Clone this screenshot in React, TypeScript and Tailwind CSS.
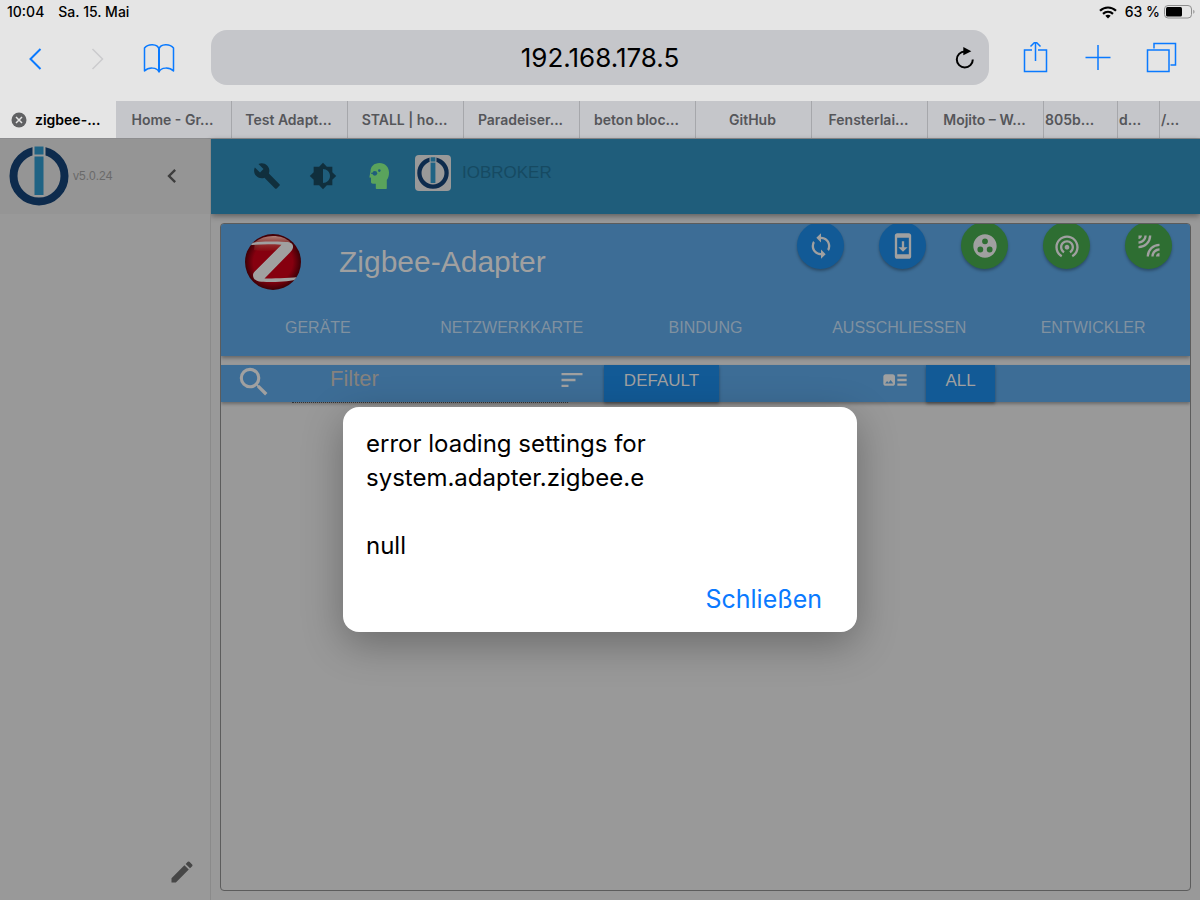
import { useState } from "react";
import {
  MdArtTrack,
  MdBrightness6,
  MdBuild,
  MdChevronLeft,
  MdCreate,
  MdGroupWork,
  MdLeakAdd,
  MdSearch,
  MdSort,
  MdSync,
  MdSystemUpdate,
  MdWifiTethering,
} from "react-icons/md";

const browserTabs = [
  "Home - Gr...",
  "Test Adapt...",
  "STALL | ho...",
  "Paradeiser...",
  "beton bloc...",
  "GitHub",
  "Fensterlai...",
  "Mojito – W...",
];

// tabs that are pushed together at the right edge
const stackedTabs = ["805b...", "d...", "/..."];

const adapterTabs = [
  "GERÄTE",
  "NETZWERKKARTE",
  "BINDUNG",
  "AUSSCHLIESSEN",
  "ENTWICKLER",
];

const actions = [
  { label: "Aktualisieren", icon: MdSync, color: "bg-[#125a96]" },
  { label: "Update", icon: MdSystemUpdate, color: "bg-[#125a96]" },
  { label: "Gruppen", icon: MdGroupWork, color: "bg-[#2e6e32]" },
  { label: "Touchlink", icon: MdWifiTethering, color: "bg-[#2e6e32]" },
  { label: "Pairing", icon: MdLeakAdd, color: "bg-[#2e6e32]" },
];

function IoBrokerLogo({ className }: { className?: string }) {
  return (
    <svg viewBox="0 0 60 60" className={className} aria-hidden="true">
      <circle cx="30" cy="30" r="25.5" fill="none" stroke="#0d2b4d" strokeWidth="8" />
      <rect x="23.5" y="0" width="13" height="12" fill="#999" />
      <rect x="25.5" y="0.5" width="9" height="8" fill="#1f6384" />
      <rect x="25.5" y="10.500" width="9" height="38.5" fill="#1f6384" />
      <rect x="25.500" y="49" width="9" height="1.500" fill="#999" />
    </svg>
  );
}

function ZigbeeLogo() {
  return (
    <svg viewBox="0 0 58 58" className="h-[58px] w-[58px]" aria-hidden="true">
      <defs>
        <radialGradient id="ball">
          <stop offset="0.7" stopColor="#86000f" />
          <stop offset="1" stopColor="#3c0006" />
        </radialGradient>
        <linearGradient id="shine" x1="0" y1="0" x2="0" y2="1">
          <stop offset="0" stopColor="#b08078" />
          <stop offset="1" stopColor="#8a2a20" stopOpacity="0.3" />
        </linearGradient>
        <clipPath id="disc">
          <circle cx="29" cy="29" r="28" />
        </clipPath>
      </defs>
      <circle cx="29" cy="29" r="28" fill="url(#ball)" />
      <path d="M11 9C16 5 22 3 29 3s13 2 17 6l2 5c-4 3-33 5-38 3z" fill="url(#shine)" />
      <g clipPath="url(#disc)" fill="#a0a0a0">
        <path d="M4 11C12 8 28 8.500 42 9c5 0 7.500 2 7 5.500-.5 2-1.500 3.500-3 5L20.500 45.500c8-.2 22 0 34-1.500v1.500c-8 4-28 3.700-37 3.200-5 0-8.500-2.500-8.500-6.500 0-1.500.5-2.500 2-4L37.500 11.800C28 11 15 11 4 12.500z" />
      </g>
    </svg>
  );
}

function HeadIcon() {
  return (
    <svg viewBox="0 0 28 28" className="h-7 w-7" aria-hidden="true">
      <path
        d="M14.500 1C9 1 5.500 4.500 5.500 9.500L4.500 14.500c-.2.800.2 1.200 1.500 1.200V20c0 1.200.7 1.700 2 1.700h2.800V26c0 .7.400 1 1 1h9c.7 0 1-.3 1-1v-8c1.500-2 2.200-4.500 2.200-7.500C24 5 20 1 14.500 1z"
        fill="#5aa35c"
      />
      <circle cx="9.800" cy="11.300" r="2.400" fill="#1f5d7b" />
      <path d="M6 11.300h4" stroke="#1f5d7b" strokeWidth="1" />
      <circle cx="14.300" cy="8.600" r="1.300" fill="#1f5d7b" />
    </svg>
  );
}

function StatusBar() {
  return (
    <div className="flex h-6 items-center justify-between pl-[7px] pr-1 text-sm font-medium">
      <div className="flex gap-3.5">
        <span>10:04</span>
        <span>Sa. 15. Mai</span>
      </div>
      <div className="flex items-center">
        <svg viewBox="0 0 18 13" className="mr-2 h-[13px] w-[18px]" fill="none" stroke="#000" aria-hidden="true">
          <path d="M1 4.800c4.500-4.400 11.500-4.400 16 0" strokeWidth="2.200" />
          <path d="M4 7.900c2.900-2.700 7.100-2.700 10 0" strokeWidth="2.200" />
          <path d="M9 12.500 6.300 9.800c1.600-1.300 3.800-1.300 5.400 0z" fill="#000" stroke="none" />
        </svg>
        <span>63 %</span>
        <svg viewBox="0 0 32 14" className="ml-1 h-3.5 w-8" aria-hidden="true">
          <rect x="0.5" y="0.5" width="27" height="12.500" rx="3.500" fill="none" stroke="#8e8e8e" />
          <rect x="2" y="2" width="16" height="9.500" rx="1.500" />
          <path d="M29.300 4.800v4c1.600-.8 1.600-3.200 0-4z" fill="#8e8e8e" />
        </svg>
      </div>
    </div>
  );
}

function Toolbar() {
  return (
    <div className="grid grid-cols-[211px_1fr_211px] items-center pb-4 pt-1.5 text-[#0a7aff]">
      <div className="flex pl-1">
        <button aria-label="Zurück" className="flex w-[62px] justify-center">
          <svg viewBox="0 0 32 32" className="h-8 w-8" fill="none" stroke="currentColor" strokeWidth="2">
            <path d="m21.500 7-10 10 10 10" />
          </svg>
        </button>
        <button aria-label="Vorwärts" className="flex w-[62px] justify-center text-[#cbcbcd]">
          <svg viewBox="0 0 32 32" className="h-8 w-8" fill="none" stroke="currentColor" strokeWidth="1.500">
            <path d="m11.500 7 10 10-10 10" />
          </svg>
        </button>
        <button aria-label="Lesezeichen" className="flex w-[62px] justify-center">
          <svg viewBox="0 0 32 32" className="h-8 w-8" fill="none" stroke="currentColor" strokeWidth="1.500" strokeLinejoin="round">
            <path d="M16 7C14.500 1.500 5 1.500 1.500 6v23c4-4 12.500-4 14.500 1 2-5 10.500-5 14.500-1V6C27 1.500 17.500 1.500 16 7z" />
            <path d="M16 7v23" strokeWidth="2" />
          </svg>
        </button>
      </div>
      <div className="relative flex h-[55px] items-center justify-center rounded-2xl bg-[#c5c6ca]">
        <span className="text-[26px] text-black">192.168.178.5</span>
        <button aria-label="Neu laden" className="absolute right-3 text-black">
          <svg viewBox="0 0 24 24" className="h-6 w-6" fill="none" stroke="currentColor" strokeWidth="2">
            <path d="M11.800 5.500A8 8 0 1 0 19.800 13.500" />
            <path d="M10.300 1 18.300 5.200l-8 4z" fill="currentColor" stroke="none" />
          </svg>
        </button>
      </div>
      <div className="flex pl-4">
        <button aria-label="Teilen" className="flex w-[62px] justify-center">
          <svg viewBox="0 0 32 32" className="h-8 w-8" fill="none" stroke="currentColor" strokeWidth="1.500">
            <path d="M12 8H4.500v21.500h22V8H18M15.500 19V0M10.500 4.500l5-5 5 5" />
          </svg>
        </button>
        <button aria-label="Neuer Tab" className="flex w-[62px] justify-center">
          <svg viewBox="0 0 32 32" className="h-8 w-8" fill="none" stroke="currentColor" strokeWidth="1.500">
            <path d="M3.500 15.500h25M16 3v25" />
          </svg>
        </button>
        <button aria-label="Tabs" className="ml-px flex w-[62px] justify-center">
          <svg viewBox="0 0 32 32" className="h-8 w-8" fill="none" stroke="currentColor" strokeWidth="1.500">
            <path d="M2.500 8h21.500v21.500H2.500zM9 6.500V1.500h21.500v21.500h-5" />
          </svg>
        </button>
      </div>
    </div>
  );
}

function TabStrip() {
  return (
    <nav className="grid h-[38px] grid-cols-[repeat(9,minmax(0,116fr))_minmax(0,74fr)_minmax(0,42fr)_minmax(0,40fr)] border-b border-[#8d8d8f] text-sm font-semibold text-[#55565a]">
      <button className="flex items-center gap-2 pl-[11px] text-black">
        <svg viewBox="0 0 16 16" className="h-4 w-4" aria-hidden="true">
          <circle cx="8" cy="8" r="7.500" fill="#606163" />
          <path d="m5 5 6 6M11 5l-6 6" stroke="#e5e5e5" strokeWidth="1.500" />
        </svg>
        zigbee-...
      </button>
      {browserTabs.map((tab) => (
        <button
          key={tab}
          className="whitespace-nowrap border-r border-[#a6a7ab] bg-[#c5c6ca] pr-0.5"
        >
          {tab}
        </button>
      ))}
      {stackedTabs.map((tab) => (
        <button
          key={tab}
          className="whitespace-nowrap border-r border-[#a6a7ab] bg-[#c5c6ca] pl-px text-left last:border-r-0"
        >
          {tab}
        </button>
      ))}
    </nav>
  );
}

function Sidebar() {
  return (
    <aside className="relative flex w-[211px] shrink-0 flex-col justify-between border-r border-[#8a8a8a] bg-[#999]">
      <div className="flex h-[75px] items-center bg-[#959595] pb-0.5 pl-[9px]">
        <IoBrokerLogo className="h-[60px] w-[60px]" />
        <span className="ml-1 text-xs text-[#6a6a6a]">v5.0.24</span>
        <button aria-label="Menü schließen" className="ml-auto pr-6 text-[#3d3d3d]">
          <MdChevronLeft size={28} />
        </button>
      </div>
      <button aria-label="Bearbeiten" className="self-end pb-3.5 pr-3.5 text-[#474747]">
        <MdCreate size={28} />
      </button>
    </aside>
  );
}

function AdapterPanel() {
  const [filter, setFilter] = useState("");

  return (
    <section className="m-[9px] flex-1 overflow-hidden rounded border border-[#5c5c5c]">
      <div className="bg-[#3d6d96] pb-1 shadow-[0_2px_4px_rgba(0,0,0,0.35)]">
        <div className="flex h-20 items-start justify-between pl-[23px] pr-[18px]">
          <div className="flex h-[76px] items-center gap-[37px]">
            <ZigbeeLogo />
            <h1 className="text-3xl text-[#a0a0a0]">Zigbee-Adapter</h1>
          </div>
          <div className="-mt-0.5 flex gap-[35px]">
            {actions.map(({ label, icon: Icon, color }) => (
              <button
                key={label}
                aria-label={label}
                className={`flex h-[47px] w-[47px] items-center justify-center rounded-full text-[#a0a0a0] shadow-[0_2px_3px_rgba(0,0,0,0.3)] ${color}`}
              >
                <Icon size={28} />
              </button>
            ))}
          </div>
        </div>
        <div className="grid h-12 grid-cols-5 text-[#8091a0]">
          {adapterTabs.map((tab) => (
            <button key={tab}>{tab}</button>
          ))}
        </div>
      </div>

      <div className="mt-[9px] flex h-[37px] items-center bg-[#3d6d96] text-[#a0a0a0] shadow-[0_2px_3px_rgba(0,0,0,0.3)]">
        <MdSearch size={38} className="mb-1 ml-3.5" />
        <div className="ml-[19px] h-[38px] w-[276px] self-start border-b border-dotted border-[#333]">
          <input
            aria-label="Filter"
            placeholder="Filter"
            value={filter}
            onChange={(e) => setFilter(e.target.value)}
            className="h-[26px] w-full bg-transparent pl-[38px] text-[22px] outline-none placeholder:text-[#85827e]"
          />
        </div>
        <MdSort size={28} className="-ml-2.5 mb-2" />
        <button className="ml-[18px] h-full w-[115px] bg-[#125a96] pb-1.5 text-[17px] shadow-[0_2px_3px_rgba(0,0,0,0.35)]">
          DEFAULT
        </button>
        <MdArtTrack size={28} className="mb-2 ml-[162px]" />
        <button className="ml-[17px] h-full w-[69px] bg-[#125a96] pb-1.5 text-[17px] shadow-[0_2px_3px_rgba(0,0,0,0.35)]">
          ALL
        </button>
      </div>
    </section>
  );
}

export default function App() {
  const [open, setOpen] = useState(true);

  return (
    <div className="flex min-h-screen flex-col bg-[#e5e5e5] font-['Inter',sans-serif] text-black">
      <header>
        <StatusBar />
        <Toolbar />
        <TabStrip />
      </header>

      <div className="relative flex flex-1 bg-[#999] font-['Liberation_Sans',sans-serif]">
        <Sidebar />
        <main className="flex min-w-0 flex-1 flex-col">
          <div className="flex h-[75px] items-center bg-[#1f5d7b] pb-0.5 pl-[42px] text-[#102f3d] shadow-[0_2px_6px_rgba(0,0,0,0.4)]">
            <button aria-label="Einstellungen">
              <MdBuild size={28} />
            </button>
            <button aria-label="Design" className="ml-7">
              <MdBrightness6 size={28} />
            </button>
            <button aria-label="Expertenmodus" className="ml-7">
              <HeadIcon />
            </button>
            <a href="#" className="mb-1.5 ml-[22px] flex items-center gap-[11px] text-[17px] text-[#164a62]">
              <span className="rounded bg-[#999] p-0.5">
                <IoBrokerLogo className="h-8 w-8" />
              </span>
              IOBROKER
            </a>
          </div>
          <AdapterPanel />
        </main>

        {open && (
          <div className="absolute inset-0 flex items-center justify-center font-['Inter',sans-serif]">
            <div
              role="alertdialog"
              aria-label="Fehler"
              className="flex w-[514px] flex-col rounded-2xl bg-white px-[23px] pb-3 pt-5 text-2xl leading-[34px] shadow-[0_12px_40px_rgba(0,0,0,0.3)]"
            >
              <p>
                error loading settings for
                <br />
                system.adapter.zigbee.e
              </p>
              <p className="mt-[34px]">null</p>
              <button
                onClick={() => setOpen(false)}
                className="mt-[19px] self-end px-3 pb-1 text-[25px] text-[#0a7aff]"
              >
                Schließen
              </button>
            </div>
          </div>
        )}
      </div>
    </div>
  );
}
